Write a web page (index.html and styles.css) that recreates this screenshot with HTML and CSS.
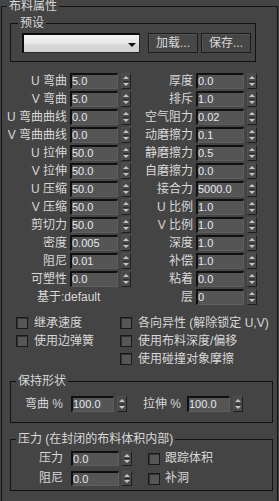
FILE: index.html
```html
<!DOCTYPE html>
<html lang="zh-CN">
<head>
    <meta charset="UTF-8">
    <meta name="viewport" content="width=device-width, initial-scale=1.0">
    <title>布料属性</title>
    <link rel="stylesheet" href="styles.css">
</head>
<body>
    <fieldset class="group group-main">
        <legend>布料属性</legend>

        <fieldset class="group group-preset">
            <legend>预设</legend>
            <div class="preset-row">
                <div class="dropdown"><span class="dropdown-arrow"></span></div>
                <div class="preset-buttons">
                    <button class="btn">加载...</button>
                    <button class="btn">保存...</button>
                </div>
            </div>
        </fieldset>

        <div class="params">
            <label class="param-label">U 弯曲</label>
            <div class="spin"><span class="spin-field">5.0</span><span class="spin-btn"></span></div>
            <label class="param-label">厚度</label>
            <div class="spin"><span class="spin-field">0.0</span><span class="spin-btn"></span></div>

            <label class="param-label">V 弯曲</label>
            <div class="spin"><span class="spin-field">5.0</span><span class="spin-btn"></span></div>
            <label class="param-label">排斥</label>
            <div class="spin"><span class="spin-field">1.0</span><span class="spin-btn"></span></div>

            <label class="param-label">U 弯曲曲线</label>
            <div class="spin"><span class="spin-field">0.0</span><span class="spin-btn"></span></div>
            <label class="param-label">空气阻力</label>
            <div class="spin"><span class="spin-field">0.02</span><span class="spin-btn"></span></div>

            <label class="param-label">V 弯曲曲线</label>
            <div class="spin"><span class="spin-field">0.0</span><span class="spin-btn"></span></div>
            <label class="param-label">动磨擦力</label>
            <div class="spin"><span class="spin-field">0.1</span><span class="spin-btn"></span></div>

            <label class="param-label">U 拉伸</label>
            <div class="spin"><span class="spin-field">50.0</span><span class="spin-btn"></span></div>
            <label class="param-label">静磨擦力</label>
            <div class="spin"><span class="spin-field">0.5</span><span class="spin-btn"></span></div>

            <label class="param-label">V 拉伸</label>
            <div class="spin"><span class="spin-field">50.0</span><span class="spin-btn"></span></div>
            <label class="param-label">自磨擦力</label>
            <div class="spin"><span class="spin-field">0.0</span><span class="spin-btn"></span></div>

            <label class="param-label">U 压缩</label>
            <div class="spin"><span class="spin-field">50.0</span><span class="spin-btn"></span></div>
            <label class="param-label">接合力</label>
            <div class="spin"><span class="spin-field">5000.0</span><span class="spin-btn"></span></div>

            <label class="param-label">V 压缩</label>
            <div class="spin"><span class="spin-field">50.0</span><span class="spin-btn"></span></div>
            <label class="param-label">U 比例</label>
            <div class="spin"><span class="spin-field">1.0</span><span class="spin-btn"></span></div>

            <label class="param-label">剪切力</label>
            <div class="spin"><span class="spin-field">50.0</span><span class="spin-btn"></span></div>
            <label class="param-label">V 比例</label>
            <div class="spin"><span class="spin-field">1.0</span><span class="spin-btn"></span></div>

            <label class="param-label">密度</label>
            <div class="spin"><span class="spin-field">0.005</span><span class="spin-btn"></span></div>
            <label class="param-label">深度</label>
            <div class="spin"><span class="spin-field">1.0</span><span class="spin-btn"></span></div>

            <label class="param-label">阻尼</label>
            <div class="spin"><span class="spin-field">0.01</span><span class="spin-btn"></span></div>
            <label class="param-label">补偿</label>
            <div class="spin"><span class="spin-field">1.0</span><span class="spin-btn"></span></div>

            <label class="param-label">可塑性</label>
            <div class="spin"><span class="spin-field">0.0</span><span class="spin-btn"></span></div>
            <label class="param-label">粘着</label>
            <div class="spin"><span class="spin-field">0.0</span><span class="spin-btn"></span></div>

            <div class="based-on">基于:default</div>
            <label class="param-label">层</label>
            <div class="spin"><span class="spin-field">0</span><span class="spin-btn"></span></div>
        </div>

        <div class="checks">
            <label class="check"><span class="check-box"></span>继承速度</label>
            <label class="check"><span class="check-box"></span>各向异性 (解除锁定 U,V)</label>
            <label class="check"><span class="check-box"></span>使用边弹簧</label>
            <label class="check"><span class="check-box"></span>使用布料深度/偏移</label>
            <label class="check check-right"><span class="check-box"></span>使用碰撞对象摩擦</label>
        </div>

        <fieldset class="group group-shape">
            <legend>保持形状</legend>
            <div class="shape-row">
                <label class="shape-label">弯曲 %</label>
                <div class="spin spin-narrow"><span class="spin-field">100.0</span><span class="spin-btn"></span></div>
                <label class="shape-label shape-label-second">拉伸 %</label>
                <div class="spin spin-narrow"><span class="spin-field">100.0</span><span class="spin-btn"></span></div>
            </div>
        </fieldset>

        <fieldset class="group group-pressure">
            <legend>压力 (在封闭的布料体积内部)</legend>
            <div class="press">
                <label class="press-label">压力</label>
                <div class="spin"><span class="spin-field">0.0</span><span class="spin-btn"></span></div>
                <label class="check"><span class="check-box"></span>跟踪体积</label>

                <label class="press-label">阻尼</label>
                <div class="spin"><span class="spin-field">0.0</span><span class="spin-btn"></span></div>
                <label class="check"><span class="check-box"></span>补洞</label>
            </div>
        </fieldset>
    </fieldset>
</body>
</html>
```

FILE: styles.css
```css
body {
    margin: 0;
    width: 279px;
    height: 501px;
    overflow: hidden;
    background-color: #444444;
    color: #d8d8d8;
    font-family: "Liberation Sans", "Noto Sans CJK SC", sans-serif;
    font-size: 12px;
    line-height: 16px;
}

/* group boxes */
.group {
    box-sizing: border-box;
    margin: 0;
    padding: 0;
    border: 1px solid #121212;
    min-inline-size: 0;
}
.group > legend {
    height: 13px;
    padding: 0 2px;
    line-height: 13px;
    white-space: nowrap;
}
.group-main {
    margin: 0 1px;
    padding: 4px 0 12px 8px;
}
.group-main > legend {
    margin-left: -3px;
}
.group-preset {
    width: 246px;
    padding: 3px 0 8px 11px;
}
.group-preset > legend {
    margin-left: -4px;
}
.group-shape {
    width: 263px;
    margin-top: 7px;
    padding: 8px 0 10px 14px;
}
.group-shape > legend {
    margin-left: -9px;
}
.group-pressure {
    width: 263px;
    margin-top: 10px;
    padding: 5px 0 4px 0;
}
.group-pressure > legend {
    margin-left: 5px;
}

/* preset row */
.preset-row {
    display: flex;
}
.dropdown {
    box-sizing: border-box;
    width: 118px;
    height: 20px;
    border-top: 2px solid #0c0c0c;
    border-left: 2px solid #0c0c0c;
    border-right: 1px solid #2a2a2a;
    border-bottom: 1px solid #2a2a2a;
    background: linear-gradient(#f4f4f4, #e8e8e8 45%, #d6d6d6 60%, #d2d2d2);
    display: flex;
    align-items: center;
    justify-content: flex-end;
    padding-right: 3px;
}
.dropdown-arrow {
    width: 0;
    height: 0;
    border-left: 4px solid transparent;
    border-right: 4px solid transparent;
    border-top: 4px solid #111;
    margin-top: 2px;
}
.preset-buttons {
    display: flex;
    gap: 3px;
    margin-left: 8px;
}
.btn {
    box-sizing: border-box;
    width: 50px;
    height: 20px;
    padding: 0;
    background-color: #474747;
    border: 1px solid #1c1c1c;
    box-shadow: inset 1px 1px 0 #535353;
    color: #d8d8d8;
    font: inherit;
    line-height: 18px;
}

/* spinner params */
.params {
    display: grid;
    grid-template-columns: 57px 61px 59px 61px;
    grid-auto-rows: 16px;
    column-gap: 3px;
    row-gap: 2px;
    margin-top: 11px;
}
.param-label {
    display: flex;
    justify-content: flex-end;
    white-space: nowrap;
}
.based-on {
    grid-column: 1 / 3;
    padding-left: 27px;
    white-space: nowrap;
}

.spin {
    display: flex;
    gap: 3px;
}
.spin-field {
    box-sizing: border-box;
    width: 48px;
    height: 16px;
    background-color: #555555;
    border-top: 2px solid #101010;
    border-left: 2px solid #101010;
    border-right: 1px solid #5e5e5e;
    border-bottom: 1px solid #5e5e5e;
    color: #e2e8f0;
    font-size: 11px;
    line-height: 13px;
    white-space: nowrap;
    overflow: hidden;
}
.spin-btn {
    box-sizing: border-box;
    width: 10px;
    height: 16px;
    border: 1px solid #1e1e1e;
    border-top-color: #505050;
    border-left-color: #505050;
    background: #4a4a4a linear-gradient(#2e2e2e, #2e2e2e) no-repeat center / 6px 1px;
    display: flex;
    flex-direction: column;
    justify-content: space-around;
    align-items: center;
}
.spin-btn::before,
.spin-btn::after {
    content: "";
    width: 0;
    height: 0;
    border-left: 3px solid transparent;
    border-right: 3px solid transparent;
}
.spin-btn::before {
    border-bottom: 3px solid #c4c4c4;
}
.spin-btn::after {
    border-top: 3px solid #c4c4c4;
}
.spin-narrow .spin-field {
    width: 43px;
}

/* checkboxes */
.checks {
    display: grid;
    grid-template-columns: 104px auto;
    grid-auto-rows: 18px;
    margin-top: 9px;
    padding-left: 6px;
}
.check {
    display: flex;
    align-items: center;
    gap: 6px;
    white-space: nowrap;
}
.check-right {
    grid-column: 2;
}
.check-box {
    box-sizing: border-box;
    width: 12px;
    height: 12px;
    flex-shrink: 0;
    border: 1px solid #1a1a1a;
    background-color: #565656;
    box-shadow: inset 1px 1px 0 #333333;
}

/* keep shape */
.shape-row {
    display: flex;
    align-items: center;
}
.shape-label {
    width: 46px;
    white-space: nowrap;
}
.shape-label-second {
    width: 44px;
    margin-left: 16px;
}

/* pressure */
.press {
    display: grid;
    grid-template-columns: 52px 61px auto;
    grid-auto-rows: 15px;
    column-gap: 8px;
    row-gap: 5px;
    line-height: 15px;
}
.press-label {
    text-align: right;
}
.press .spin-field,
.press .spin-btn {
    height: 15px;
}
.press .spin-field {
    line-height: 12px;
}
.press .check {
    margin-left: 8px;
    gap: 5px;
}
```
